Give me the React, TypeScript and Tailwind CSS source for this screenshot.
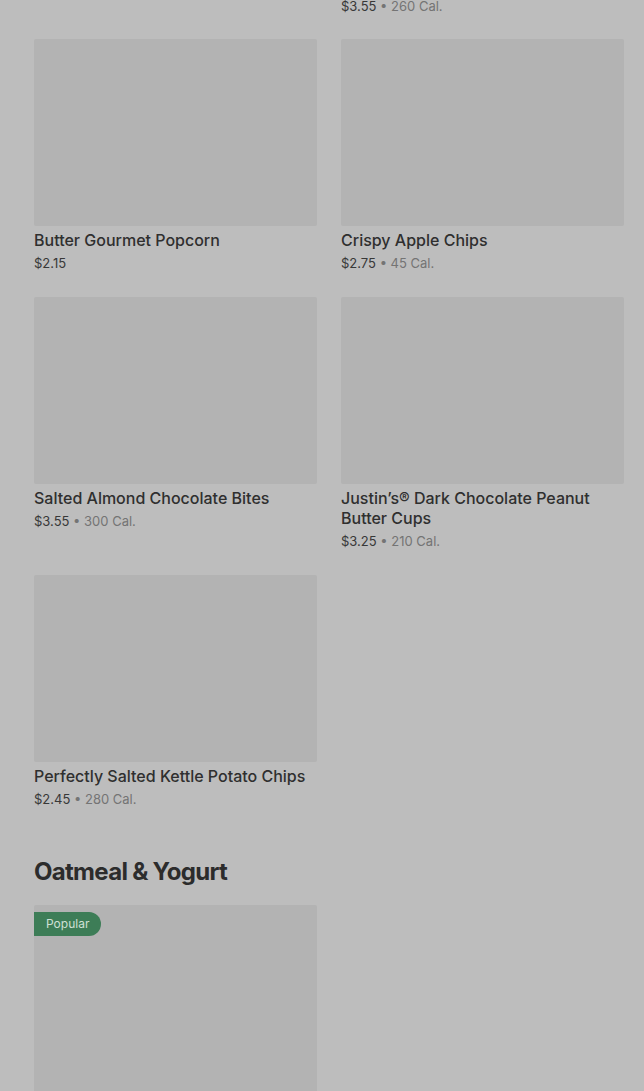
import React from "react";

type Item = {
  title: string;
  price: string;
  cal?: string;
  popular?: boolean;
};

const snackRows: Item[][] = [
  [
    { title: "Butter Gourmet Popcorn", price: "$2.15" },
    { title: "Crispy Apple Chips", price: "$2.75", cal: "45 Cal." },
  ],
  [
    { title: "Salted Almond Chocolate Bites", price: "$3.55", cal: "300 Cal." },
    { title: "Justin’s® Dark Chocolate Peanut Butter Cups", price: "$3.25", cal: "210 Cal." },
  ],
  [{ title: "Perfectly Salted Kettle Potato Chips", price: "$2.45", cal: "280 Cal." }],
];

const PriceLine = ({ price, cal }: { price: string; cal?: string }) => (
  <div className="text-[13px] leading-5 text-[#383838]">
    {price}
    {cal && <span className="text-[#747474]"> • {cal}</span>}
  </div>
);

const Card = ({ item }: { item: Item }) => (
  <div className="flex flex-col">
    <div className="relative h-[187px] w-full bg-[#b3b3b3] rounded-[2px]">
      {item.popular && (
        <div className="absolute left-0 top-[7px] h-6 pl-3 pr-3 flex items-center rounded-r-full bg-[#3d7d57] text-[12px] text-[#cfe0d5]">
          Popular
        </div>
      )}
    </div>
    <div className="mt-1 text-[16px] leading-5 font-medium text-[#2f2f2f]">{item.title}</div>
    <div className="mt-[3px]">
      <PriceLine price={item.price} cal={item.cal} />
    </div>
  </div>
);

export default function App() {
  return (
    <div
      className="w-[644px] h-[1091px] overflow-hidden bg-[#bdbdbd] pl-[34px] pr-[20px]"
      style={{ fontFamily: "Inter, 'Noto Sans', sans-serif" }}
    >
      {/* tail of the row above, scrolled mostly out of view */}
      <div className="grid grid-cols-2 gap-x-6 -mt-[4px]">
        <div />
        <PriceLine price="$3.55" cal="260 Cal." />
      </div>

      <div className="mt-[23px] flex flex-col gap-6">
        {snackRows.map((row, i) => (
          <div key={i} className="grid grid-cols-2 gap-x-6">
            {row.map((item, j) => (
              <Card key={j} item={item} />
            ))}
          </div>
        ))}
      </div>

      <h2 className="mt-[47px] text-[24px] leading-8 font-bold tracking-[-0.7px] text-[#2c2c2c]">
        Oatmeal &amp; Yogurt
      </h2>

      <div className="mt-[17px] grid grid-cols-2 gap-x-6">
        <Card item={{ title: "Steel Cut Oatmeal", price: "$3.95", popular: true }} />
      </div>
    </div>
  );
}
